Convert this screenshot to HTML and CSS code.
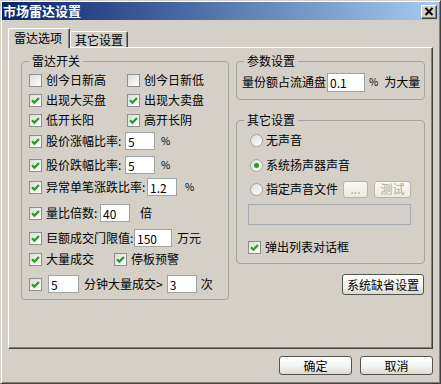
FILE: index.html
```html
<!DOCTYPE html>
<html lang="zh-CN">
<head>
    <meta charset="UTF-8">
    <title>市场雷达设置</title>
    <link rel="stylesheet" href="styles.css">
</head>
<body>
<div class="window">
    <div class="titlebar">
        <span class="title">市场雷达设置</span>
        <span class="close-btn">
            <svg width="10" height="9" viewBox="0 0 10 9"><path d="M1.5 1l7 7M8.5 1l-7 7" stroke="#000" stroke-width="2"/></svg>
        </span>
    </div>

    <div class="tabs">
        <span class="tab active">雷达选项</span>
        <span class="tab">其它设置</span>
    </div>

    <div class="panel">
        <!-- 雷达开关 -->
        <fieldset class="group group-radar">
            <legend>雷达开关</legend>
            <div class="group-body radar-body">
                <div class="row">
                    <label class="check col1"><span class="cb"></span>创今日新高</label>
                    <label class="check"><span class="cb"></span>创今日新低</label>
                </div>
                <div class="row">
                    <label class="check col1"><span class="cb on"><svg width="9" height="9" viewBox="0 0 9 9"><path d="M1 4.2l2.4 2.4L8 2" stroke="#21a121" stroke-width="2.2" fill="none"/></svg></span>出现大买盘</label>
                    <label class="check"><span class="cb on"><svg width="9" height="9" viewBox="0 0 9 9"><path d="M1 4.2l2.4 2.4L8 2" stroke="#21a121" stroke-width="2.2" fill="none"/></svg></span>出现大卖盘</label>
                </div>
                <div class="row">
                    <label class="check col1"><span class="cb on"><svg width="9" height="9" viewBox="0 0 9 9"><path d="M1 4.2l2.4 2.4L8 2" stroke="#21a121" stroke-width="2.2" fill="none"/></svg></span>低开长阳</label>
                    <label class="check"><span class="cb on"><svg width="9" height="9" viewBox="0 0 9 9"><path d="M1 4.2l2.4 2.4L8 2" stroke="#21a121" stroke-width="2.2" fill="none"/></svg></span>高开长阴</label>
                </div>
                <div class="row mt1">
                    <label class="check"><span class="cb on"><svg width="9" height="9" viewBox="0 0 9 9"><path d="M1 4.2l2.4 2.4L8 2" stroke="#21a121" stroke-width="2.2" fill="none"/></svg></span><span class="lbl lbl-rate">股价涨幅比率:</span></label>
                    <input class="field" type="text" value="5">
                    <span class="unit pct">%</span>
                </div>
                <div class="row mt4">
                    <label class="check"><span class="cb on"><svg width="9" height="9" viewBox="0 0 9 9"><path d="M1 4.2l2.4 2.4L8 2" stroke="#21a121" stroke-width="2.2" fill="none"/></svg></span><span class="lbl lbl-rate">股价跌幅比率:</span></label>
                    <input class="field" type="text" value="5">
                    <span class="unit pct">%</span>
                </div>
                <div class="row mt2">
                    <label class="check"><span class="cb on"><svg width="9" height="9" viewBox="0 0 9 9"><path d="M1 4.2l2.4 2.4L8 2" stroke="#21a121" stroke-width="2.2" fill="none"/></svg></span><span class="lbl lbl-single">异常单笔涨跌比率:</span></label>
                    <input class="field" type="text" value="1.2">
                    <span class="unit pct-wide">%</span>
                </div>
                <div class="row mt6">
                    <label class="check"><span class="cb on"><svg width="9" height="9" viewBox="0 0 9 9"><path d="M1 4.2l2.4 2.4L8 2" stroke="#21a121" stroke-width="2.2" fill="none"/></svg></span><span class="lbl lbl-ratio">量比倍数:</span></label>
                    <input class="field" type="text" value="40">
                    <span class="unit times">倍</span>
                </div>
                <div class="row mt5">
                    <label class="check"><span class="cb on"><svg width="9" height="9" viewBox="0 0 9 9"><path d="M1 4.2l2.4 2.4L8 2" stroke="#21a121" stroke-width="2.2" fill="none"/></svg></span><span class="lbl lbl-amount">巨额成交门限值:</span></label>
                    <input class="field field-wide" type="text" value="150">
                    <span class="unit money">万元</span>
                </div>
                <div class="row mt1">
                    <label class="check col1-short"><span class="cb on"><svg width="9" height="9" viewBox="0 0 9 9"><path d="M1 4.2l2.4 2.4L8 2" stroke="#21a121" stroke-width="2.2" fill="none"/></svg></span>大量成交</label>
                    <label class="check"><span class="cb on"><svg width="9" height="9" viewBox="0 0 9 9"><path d="M1 4.2l2.4 2.4L8 2" stroke="#21a121" stroke-width="2.2" fill="none"/></svg></span>停板预警</label>
                </div>
                <div class="row mt5">
                    <span class="cb on"><svg width="9" height="9" viewBox="0 0 9 9"><path d="M1 4.2l2.4 2.4L8 2" stroke="#21a121" stroke-width="2.2" fill="none"/></svg></span>
                    <input class="field field-min" type="text" value="5">
                    <span class="unit minutes">分钟大量成交&gt;</span>
                    <input class="field" type="text" value="3">
                    <span class="unit count">次</span>
                </div>
            </div>
        </fieldset>

        <div class="side">
            <!-- 参数设置 -->
            <fieldset class="group group-param">
                <legend>参数设置</legend>
                <div class="group-body param-body">
                    <div class="row">
                        <span>量份额占流通盘</span>
                        <input class="field field-param" type="text" value="0.1">
                        <span class="unit pct-param">%</span>
                        <span class="unit big">为大量</span>
                    </div>
                </div>
            </fieldset>

            <!-- 其它设置 -->
            <fieldset class="group group-other">
                <legend>其它设置</legend>
                <div class="group-body other-body">
                    <div class="row">
                        <label class="radio"><span class="rd"></span>无声音</label>
                    </div>
                    <div class="row mt5">
                        <label class="radio"><span class="rd on"></span>系统扬声器声音</label>
                    </div>
                    <div class="row mt4">
                        <label class="radio"><span class="rd"></span>指定声音文件</label>
                        <button class="btn btn-small btn-browse" disabled>...</button>
                        <button class="btn btn-small btn-test" disabled>测试</button>
                    </div>
                    <div class="file-path"></div>
                    <div class="row popup-row">
                        <label class="check"><span class="cb on"><svg width="9" height="9" viewBox="0 0 9 9"><path d="M1 4.2l2.4 2.4L8 2" stroke="#21a121" stroke-width="2.2" fill="none"/></svg></span>弹出列表对话框</label>
                    </div>
                </div>
            </fieldset>

            <div class="side-actions">
                <button class="btn btn-default">系统缺省设置</button>
            </div>
        </div>
    </div>

    <div class="actions">
        <button class="btn btn-dlg">确定</button>
        <button class="btn btn-dlg">取消</button>
    </div>
</div>
</body>
</html>
```

FILE: styles.css
```css
* {
    box-sizing: border-box;
}
body {
    margin: 0;
    font-family: "Noto Sans CJK SC", "DejaVu Sans", sans-serif;
    font-size: 12px;
    line-height: 14px;
    color: #000;
    background: #d4d0c8;
}
.window {
    width: 441px;
    height: 384px;
    padding: 1px;
    background: #d4d0c8;
    border: 1px solid;
    border-color: #d4d0c8 #404040 #404040 #d4d0c8;
    box-shadow: inset 1px 1px #fff, inset -1px -1px #808080;
    display: flex;
    flex-direction: column;
}

/* title bar */
.titlebar {
    height: 18px;
    padding: 0 2px 0 1px;
    display: flex;
    align-items: center;
    justify-content: space-between;
    background: linear-gradient(to right, #0a246a, #a6caf0);
}
.title {
    color: #fff;
    font-weight: bold;
    font-size: 13px;
}
.close-btn {
    width: 16px;
    height: 14px;
    margin-top: 1px;
    background: #d4d0c8;
    border: 1px solid;
    border-color: #fff #404040 #404040 #fff;
    box-shadow: inset -1px -1px #808080;
    display: flex;
    align-items: center;
    justify-content: center;
}

/* tabs */
.tabs {
    height: 19px;
    margin: 8px 0 0 6px;
    display: flex;
    align-items: flex-end;
}
.tab {
    height: 16px;
    padding: 1px 4px 0 4px;
    border: 1px solid;
    border-bottom: none;
    border-color: #fff #404040 transparent #fff;
    border-radius: 2px 2px 0 0;
    box-shadow: inset -1px 0 #808080;
}
.tab.active {
    position: relative;
    z-index: 1;
    height: 20px;
    margin-bottom: -1px;
    padding: 2px 7px 0 5px;
    background: #d4d0c8;
}

/* tab page */
.panel {
    height: 302px;
    margin: 0 6px 0 6px;
    padding: 6px 0 0 12px;
    border: 1px solid;
    border-color: #fff #404040 #404040 #fff;
    box-shadow: inset -1px -1px #808080;
    display: flex;
    align-items: flex-start;
    gap: 7px;
}
.group {
    margin: 0;
    padding: 0;
    min-width: 0;
    border: 1px solid #a5a597;
    border-radius: 4px;
}
.group legend {
    margin-left: 7px;
    padding: 0 3px;
    line-height: 14px;
}
.group-radar {
    width: 208px;
}
.radar-body {
    padding: 2px 0 5px 7px;
}
.side {
    width: 189px;
    display: flex;
    flex-direction: column;
}
.param-body {
    padding: 4px 0 7px 5px;
}
.group-other {
    margin-top: 13px;
}
.other-body {
    padding: 3px 0 6px 12px;
}
.side-actions {
    margin-top: 10px;
    padding-right: 1px;
    display: flex;
    justify-content: flex-end;
}

/* rows */
.row {
    height: 20px;
    display: flex;
    align-items: center;
    white-space: nowrap;
}
.mt1 { margin-top: 1px; }
.mt2 { margin-top: 2px; }
.mt4 { margin-top: 4px; }
.mt5 { margin-top: 5px; }
.mt6 { margin-top: 6px; }

.check,
.radio {
    display: flex;
    align-items: center;
    gap: 4px;
}
.radio {
    gap: 3px;
}
.col1 {
    width: 98px;
}
.col1-short {
    width: 85px;
}
.cb {
    flex: none;
    width: 13px;
    height: 13px;
    border: 1px solid #8e8f8f;
    background: linear-gradient(135deg, #dcdcd7, #fff);
    display: flex;
    align-items: center;
    justify-content: center;
}
.rd {
    flex: none;
    width: 13px;
    height: 13px;
    margin-left: 1px;
    border: 1px solid #a5a59c;
    border-radius: 50%;
    background: linear-gradient(135deg, #dcdcd7, #fff);
    display: flex;
    align-items: center;
    justify-content: center;
}
.rd.on::after {
    content: "";
    width: 5px;
    height: 5px;
    border-radius: 50%;
    background: #21a121;
}

/* labels in front of the inputs */
.lbl-rate { width: 79px; }
.lbl-single { width: 101px; }
.lbl-ratio { width: 54px; }
.lbl-amount { width: 88px; }

.field {
    width: 30px;
    height: 18px;
    margin: 0;
    padding: 0 2px;
    border: 1px solid #9ea3a8;
    background: #fff;
    font: inherit;
    color: #000;
    outline: none;
}
.field-wide { width: 38px; }
.field-min { width: 31px; margin-left: 6px; }
.field-param { width: 38px; height: 19px; margin-left: 1px; }

.unit { flex: none; }
.pct { margin-left: 6px; font-size: 10px; }
.pct-wide { margin-left: 8px; font-size: 10px; }
.times { margin-left: 10px; }
.money { margin-left: 5px; }
.minutes { margin-left: 5px; margin-right: 4px; }
.count { margin-left: 4px; }
.pct-param { margin-left: 4px; font-size: 10px; }
.big { margin-left: 6px; }

/* 其它设置 */
.file-path {
    width: 163px;
    height: 21px;
    margin-top: 5px;
    margin-left: -1px;
    border: 1px solid #a5acb2;
    background: #d4d0c8;
}
.popup-row {
    margin-top: 12px;
    margin-left: -1px;
}

/* buttons */
.btn {
    height: 19px;
    margin: 0;
    padding: 0;
    font: inherit;
    color: #000;
    border: 1px solid #55554f;
    border-radius: 3px;
    background: linear-gradient(#fff, #f4f4f0 55%, #dcd8cc);
}
.btn:disabled {
    color: #aca899;
    border-color: #b8b4a8;
    background: linear-gradient(#f8f8f4, #ece9e0);
}
.btn-small {
    height: 17px;
}
.btn-browse {
    width: 25px;
    margin-left: 5px;
}
.btn-test {
    width: 37px;
    margin-left: 6px;
}
.btn-default {
    width: 82px;
    height: 21px;
}
.actions {
    margin-top: 7px;
    padding-right: 6px;
    display: flex;
    justify-content: flex-end;
    gap: 8px;
}
.btn-dlg {
    width: 73px;
}
```
